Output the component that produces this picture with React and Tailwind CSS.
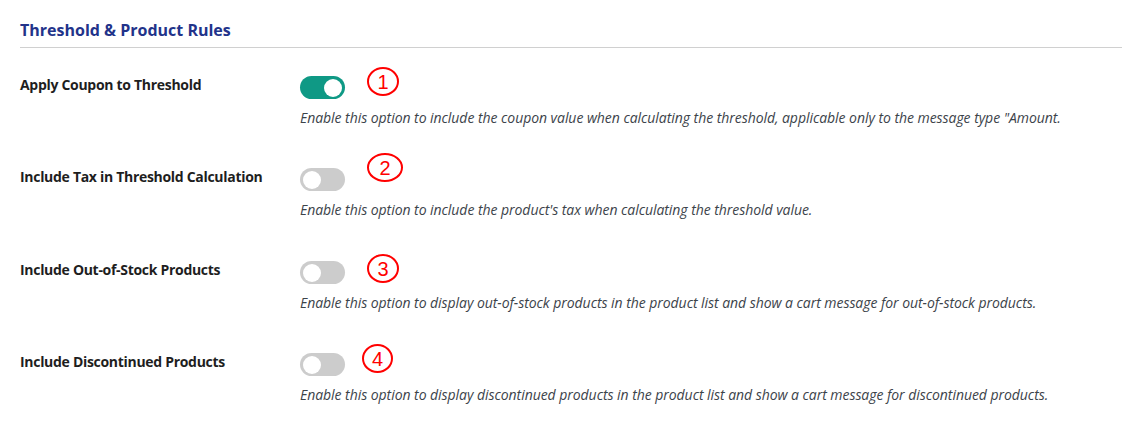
import React from "react";

const rows = [
  { label: "Apply Coupon to Threshold", on: true, n: "1", desc: 'Enable this option to include the coupon value when calculating the threshold, applicable only to the message type "Amount.', c: "left-[67px] -top-[9px] w-[32px] h-[29px]" },
  { label: "Include Tax in Threshold Calculation", on: false, n: "2", desc: "Enable this option to include the product's tax when calculating the threshold value.", c: "left-[67px] -top-[15px] w-[36px] h-[29px]" },
  { label: "Include Out-of-Stock Products", on: false, n: "3", desc: "Enable this option to display out-of-stock products in the product list and show a cart message for out-of-stock products.", c: "left-[67px] -top-[7px] w-[32px] h-[29px]" },
  { label: "Include Discontinued Products", on: false, n: "4", desc: "Enable this option to display discontinued products in the product list and show a cart message for discontinued products.", c: "left-[62px] -top-[9px] w-[31px] h-[29px]" },
];

function Toggle({ on }) {
  return (
    <div className={`w-[45px] h-[23px] rounded-full flex items-center px-[3px] ${on ? "bg-[#0f9985] justify-end" : "bg-[#cccccc] justify-start"}`}>
      <div className="w-[18px] h-[18px] rounded-full bg-white" />
    </div>
  );
}

export default function App() {
  return (
    <div className="bg-white w-[1122px] h-[431px] pl-5 pt-[20px]" style={{ fontFamily: '"Open Sans", "Noto Sans", sans-serif' }}>
      <h2 className="text-[16px] leading-[20px] font-bold text-[#22338a]">Threshold &amp; Product Rules</h2>
      <div className="mt-[7px] h-px bg-[#d0d0d0]" />
      <div className="pt-[28px] flex flex-col gap-[40px]">
        {rows.map((r, i) => (
          <div key={r.n} className={`flex ${i === 2 ? "mt-[1px]" : ""}`}>
            <div className="w-[280px] text-[14px] leading-[20px] font-bold tracking-[-0.3px] text-[#1e1e1e] -mt-[1px]">{r.label}</div>
            <div className="flex flex-col">
              <div className="relative">
                <Toggle on={r.on} />
                <div className={`absolute ${r.c} rounded-[50%] border-2 border-[#ff0000] flex items-center justify-center text-[#ff0000] text-[20px] leading-none`} style={{ fontFamily: '"Liberation Sans", sans-serif' }}>
                  {r.n}
                </div>
              </div>
              <div className="mt-[9px] text-[14px] leading-[20px] italic tracking-[-0.05px] text-[#3c434a]">{r.desc}</div>
            </div>
          </div>
        ))}
      </div>
    </div>
  );
}
